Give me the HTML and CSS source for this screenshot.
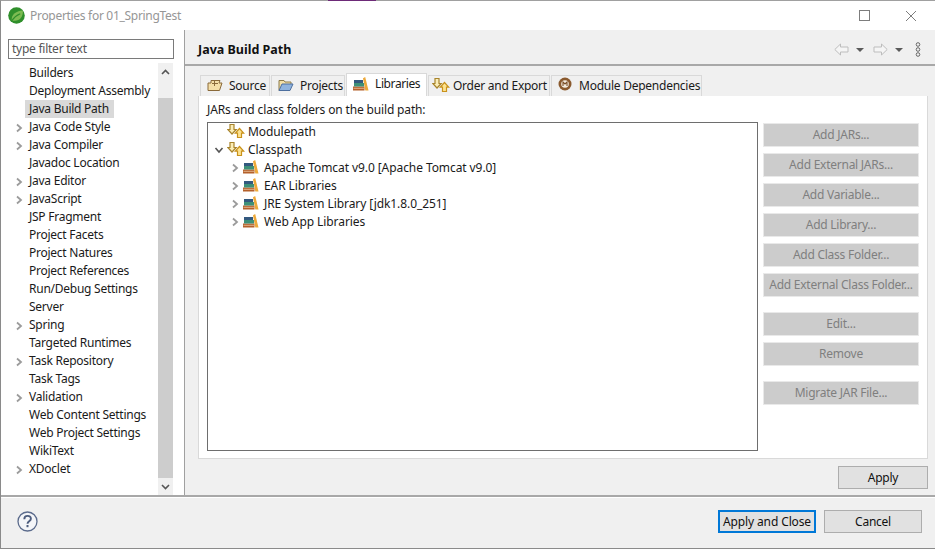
FILE: index.html
```html
<!DOCTYPE html>
<html lang="en">
<head>
<meta charset="utf-8">
<title>Properties for 01_SpringTest</title>
<link rel="stylesheet" href="styles.css">
</head>
<body>
<svg class="defs" width="0" height="0">
  <defs>
    <symbol id="cp" viewBox="0 0 18 16">
      <path d="M3 1.500h4v5h2.200L5 11 .8 6.500H3z" fill="#fbeeb8" stroke="#a8842c" stroke-width="1.200"/>
      <path d="M12.500 5.500l4.200 4.700h-2.200v4.300h-4v-4.300H8.300z" fill="#fde391" stroke="#c9921c" stroke-width="1.200"/>
    </symbol>
    <symbol id="lib" viewBox="0 0 16 14">
      <rect x="0" y="9.500" width="11.500" height="4" fill="#b4602b"/>
      <rect x=".5" y="10.800" width="10.500" height="1" fill="#e2b48c"/>
      <rect x="1" y="6" width="10" height="3.500" fill="#3d9078"/>
      <rect x="1" y="3" width="9" height="3" fill="#33597f"/>
      <path d="M10 1.300l2.200-1.300 3.300 13.500h-3.200z" fill="#eda93a"/>
    </symbol>
    <symbol id="chev-r" viewBox="0 0 10 10"><path d="M3 1.500L7 5 3 8.500" fill="none" stroke="#9b9b9b" stroke-width="1.800"/></symbol>
    <symbol id="chev-d" viewBox="0 0 10 10"><path d="M1.500 3L5 7l3.500-4" fill="none" stroke="#555" stroke-width="1.600"/></symbol>
  </defs>
</svg>
<div class="window">
  <div class="behind-sliver"></div>
  <header class="titlebar">
    <svg class="app-icon" width="17" height="17" viewBox="0 0 16 16">
      <circle cx="8" cy="8" r="7.800" fill="#2f8f2b"/>
      <path d="M3.500 12.500C3 7.500 7 3.800 14 3.300c.4 5.700-3 9.700-7.500 9.700-1.300 0-2.200-.2-3-.5z" fill="#7dbb52"/>
      <path d="M3.500 13C5.500 9.800 8 7.800 11.500 6.300" stroke="#2f8f2b" fill="none"/>
    </svg>
    <span class="title-text">Properties for 01_SpringTest</span>
    <div class="win-controls">
      <svg width="11" height="11" viewBox="0 0 11 11"><rect x=".5" y=".5" width="10" height="10" fill="none" stroke="#7d7d7d"/></svg>
      <svg width="12" height="12" viewBox="0 0 12 12"><path d="M1 1l10 10M11 1L1 11" stroke="#7d7d7d" fill="none"/></svg>
    </div>
  </header>
  <div class="main">
    <aside class="sidebar">
      <div class="filter">type filter text</div>
      <div class="tree-wrap">
        <ul class="nav">
          <li><span class="tw"></span><span>Builders</span></li>
          <li><span class="tw"></span><span>Deployment Assembly</span></li>
          <li><span class="tw"></span><span class="sel">Java Build Path</span></li>
          <li><span class="tw"><svg width="10" height="10"><use href="#chev-r"/></svg></span><span>Java Code Style</span></li>
          <li><span class="tw"><svg width="10" height="10"><use href="#chev-r"/></svg></span><span>Java Compiler</span></li>
          <li><span class="tw"></span><span>Javadoc Location</span></li>
          <li><span class="tw"><svg width="10" height="10"><use href="#chev-r"/></svg></span><span>Java Editor</span></li>
          <li><span class="tw"><svg width="10" height="10"><use href="#chev-r"/></svg></span><span>JavaScript</span></li>
          <li><span class="tw"></span><span>JSP Fragment</span></li>
          <li><span class="tw"></span><span>Project Facets</span></li>
          <li><span class="tw"></span><span>Project Natures</span></li>
          <li><span class="tw"></span><span>Project References</span></li>
          <li><span class="tw"></span><span>Run/Debug Settings</span></li>
          <li><span class="tw"></span><span>Server</span></li>
          <li><span class="tw"><svg width="10" height="10"><use href="#chev-r"/></svg></span><span>Spring</span></li>
          <li><span class="tw"></span><span>Targeted Runtimes</span></li>
          <li><span class="tw"><svg width="10" height="10"><use href="#chev-r"/></svg></span><span>Task Repository</span></li>
          <li><span class="tw"></span><span>Task Tags</span></li>
          <li><span class="tw"><svg width="10" height="10"><use href="#chev-r"/></svg></span><span>Validation</span></li>
          <li><span class="tw"></span><span>Web Content Settings</span></li>
          <li><span class="tw"></span><span>Web Project Settings</span></li>
          <li><span class="tw"></span><span>WikiText</span></li>
          <li><span class="tw"><svg width="10" height="10"><use href="#chev-r"/></svg></span><span>XDoclet</span></li>
        </ul>
        <div class="scrollbar">
          <svg class="sb-arrow" width="15" height="17" viewBox="0 0 15 17"><path d="M4 11l3.500-3.500L11 11" fill="none" stroke="#555" stroke-width="1.600"/></svg>
          <div class="sb-thumb"></div>
          <svg class="sb-arrow" width="15" height="17" viewBox="0 0 15 17"><path d="M4 7l3.500 3.500L11 7" fill="none" stroke="#555" stroke-width="1.600"/></svg>
        </div>
      </div>
    </aside>
    <section class="content">
      <div class="page-head">
        <h1>Java Build Path</h1>
        <div class="head-tools">
          <svg width="15" height="13" viewBox="0 0 15 13"><path d="M.8 6.500L6.500 1v3h7.500v5H6.500v3z" fill="#f5f5f5" stroke="#bdbdbd"/></svg>
          <svg class="drop" width="8" height="4" viewBox="0 0 8 4"><path d="M0 0h8L4 4z" fill="#5a5a5a"/></svg>
          <svg class="next" width="15" height="13" viewBox="0 0 15 13"><path d="M14.200 6.500L8.500 1v3H1v5h7.500v3z" fill="#f5f5f5" stroke="#bdbdbd"/></svg>
          <svg class="drop" width="8" height="4" viewBox="0 0 8 4"><path d="M0 0h8L4 4z" fill="#5a5a5a"/></svg>
          <svg class="menu" width="6" height="15" viewBox="0 0 6 15"><g fill="none" stroke="#666"><circle cx="3" cy="2.500" r="1.800"/><circle cx="3" cy="7.500" r="1.800"/><circle cx="3" cy="12.500" r="1.800"/></g></svg>
        </div>
      </div>
      <div class="page-body">
        <div class="tabs">
          <div class="tab t-source">
            <svg width="16" height="14" viewBox="0 0 16 14"><path d="M1 12.500V5h3V2.500h9l-1 2.500h3l-2.500 7.500z" fill="#f5dfa8" stroke="#8a6a3a"/><path d="M7.500 2.500V8M5 5.500h6" stroke="#8a6a3a" fill="none"/></svg>
            <span>Source</span>
          </div>
          <div class="tab t-projects">
            <svg width="16" height="14" viewBox="0 0 16 14"><path d="M1 12.500V2.500h5l1 1.500h6v2" fill="#f3dfa6" stroke="#8c7a4a"/><path d="M1 12.500L4 6h11l-3 6.500z" fill="#8fb3de" stroke="#4d6f9f"/></svg>
            <span>Projects</span>
          </div>
          <div class="tab tab-active t-lib">
            <svg width="16" height="14"><use href="#lib"/></svg>
            <span>Libraries</span>
          </div>
          <div class="tab t-order">
            <svg width="18" height="16"><use href="#cp"/></svg>
            <span>Order and Export</span>
          </div>
          <div class="tab t-module">
            <svg class="m-icon" width="14" height="14" viewBox="0 0 14 14"><circle cx="7" cy="7" r="6.500" fill="#8a5a2e"/><circle cx="7" cy="7" r="3.800" fill="#f3ece0"/><path d="M5 9V5l2 2 2-2v4" fill="none" stroke="#7a4e26" stroke-width="1.100"/></svg>
            <span>Module Dependencies</span>
          </div>
        </div>
        <div class="panel">
          <div class="panel-label">JARs and class folders on the build path:</div>
          <div class="panel-row">
            <div class="path-tree">
              <div class="row r1"><span class="tw2"></span><svg width="18" height="16"><use href="#cp"/></svg><span>Modulepath</span></div>
              <div class="row r1"><span class="tw2"><svg width="10" height="10"><use href="#chev-d"/></svg></span><svg width="18" height="16"><use href="#cp"/></svg><span>Classpath</span></div>
              <div class="row r2"><span class="tw2"><svg width="10" height="10"><use href="#chev-r"/></svg></span><svg width="16" height="14"><use href="#lib"/></svg><span>Apache Tomcat v9.0 [Apache Tomcat v9.0]</span></div>
              <div class="row r2"><span class="tw2"><svg width="10" height="10"><use href="#chev-r"/></svg></span><svg width="16" height="14"><use href="#lib"/></svg><span>EAR Libraries</span></div>
              <div class="row r2"><span class="tw2"><svg width="10" height="10"><use href="#chev-r"/></svg></span><svg width="16" height="14"><use href="#lib"/></svg><span>JRE System Library [jdk1.8.0_251]</span></div>
              <div class="row r2"><span class="tw2"><svg width="10" height="10"><use href="#chev-r"/></svg></span><svg width="16" height="14"><use href="#lib"/></svg><span>Web App Libraries</span></div>
            </div>
            <div class="side-buttons">
              <div class="btn-group">
                <div class="dis">Add JARs...</div>
                <div class="dis">Add External JARs...</div>
                <div class="dis">Add Variable...</div>
                <div class="dis">Add Library...</div>
                <div class="dis">Add Class Folder...</div>
                <div class="dis">Add External Class Folder...</div>
              </div>
              <div class="btn-group">
                <div class="dis">Edit...</div>
                <div class="dis">Remove</div>
              </div>
              <div class="btn-group">
                <div class="dis">Migrate JAR File...</div>
              </div>
            </div>
          </div>
        </div>
        <div class="apply-row"><div class="btn btn-apply">Apply</div></div>
      </div>
    </section>
  </div>
  <footer class="footer">
    <svg class="help" width="21" height="21" viewBox="0 0 21 21"><circle cx="10.500" cy="10.500" r="9.500" fill="#f4f5f8" stroke="#5b6b8c" stroke-width="1.300"/><path d="M7.300 8.200c0-4.300 6.600-4.300 6.600-.4 0 2.500-3.400 2.600-3.400 5" fill="none" stroke="#4d5d7e" stroke-width="1.900"/><rect x="9.500" y="14" width="2" height="2.200" fill="#4d5d7e"/></svg>
    <div class="footer-btns">
      <div class="btn btn-default">Apply and Close</div>
      <div class="btn btn-cancel">Cancel</div>
    </div>
  </footer>
</div>
</body>
</html>
```
FILE: styles.css
```css
* { box-sizing: border-box; }
html, body { margin: 0; padding: 0; }
body {
  width: 935px;
  height: 549px;
  overflow: hidden;
  font-family: "Noto Sans", "Open Sans", "Liberation Sans", sans-serif;
  font-size: 12px;
  letter-spacing: -0.25px;
  color: #1a1a1a;
}
.defs { position: absolute; }
svg { display: block; flex: none; }
.window {
  position: relative;
  width: 935px;
  height: 549px;
  display: flex;
  flex-direction: column;
  background: #fff;
  border: 1px solid #8a8a8a;
  border-top-color: #a0a0a0;
  border-right: 0;
}
.behind-sliver {
  position: absolute;
  top: -1px;
  left: 327px;
  width: 48px;
  height: 1px;
  background: #6d2a78;
}
.titlebar {
  height: 29px;
  display: flex;
  align-items: center;
  padding-left: 7px;
  background: #fff;
}
.title-text { margin-left: 5px; color: #969696; letter-spacing: -0.3px; }
.win-controls {
  margin-left: auto;
  display: flex;
  align-items: center;
  gap: 35px;
  padding-right: 18px;
}
.main { height: 465px; display: flex; }
.sidebar {
  width: 184px;
  padding: 9px 10px 0 7px;
  border-right: 1px solid #a0a0a0;
  background: #fff;
  display: flex;
  flex-direction: column;
}
.filter {
  height: 20px;
  border: 1px solid #7a7a7a;
  padding-left: 3px;
  line-height: 18px;
  color: #555;
}
.tree-wrap { flex: 1; margin: 5px 1px 0 0; display: flex; min-height: 0; }
.nav { list-style: none; margin: 0; padding: 0; flex: 1; }
.nav li { height: 18px; display: flex; align-items: center; line-height: 18px; white-space: nowrap; }
.nav .tw { width: 21px; padding-left: 6px; margin-top: 2px; flex: none; }
.nav .sel { background: #d9d9d9; padding: 0 4px; margin-left: -4px; width: 89px; }
.nav li span:last-child { color: #1a1a1a; }
.scrollbar { width: 15px; margin-top: -1px; display: flex; flex-direction: column; background: #f0f0f0; }
.sb-arrow { height: 17px; }
.sb-thumb { height: 380px; flex: none; background: #cdcdcd; margin-top: 18px; margin-bottom: auto; }
.content { flex: 1; display: flex; flex-direction: column; background: #f0f0f0; }
.page-head {
  height: 36px;
  display: flex;
  align-items: center;
  padding: 5px 14px 0 13px;
  border-bottom: 2px solid #a8a8a8;
}
.page-head h1 { margin: 0; font-size: 12.500px; font-weight: 700; color: #111; letter-spacing: 0; }
.head-tools { margin-left: auto; display: flex; align-items: center; gap: 7px; }
.head-tools .next { margin-left: 2px; }
.head-tools .menu { margin-left: 5px; }
.page-body { flex: 1; padding: 7px 7px 0 13px; display: flex; flex-direction: column; }
.tabs { display: flex; height: 23px; margin-left: 2px; align-items: flex-end; gap: 1px; }
.tab {
  height: 21px;
  display: flex;
  align-items: center;
  gap: 6px;
  padding: 0 0 2px 6px;
  background: #f0f0f0;
  border: 1px solid #d9d9d9;
  border-bottom: 0;
  white-space: nowrap;
}
.t-source { width: 70px; }
.t-projects { width: 74px; }
.t-lib { width: 81px; }
.t-order { width: 122px; padding-left: 3px; gap: 3px; }
.t-module { width: 151px; padding-left: 6px; gap: 7px; }
.m-icon { margin-top: -3px; }
.tab-active { height: 23px; background: #fff; padding-bottom: 3px; }
.t-lib span { letter-spacing: -0.4px; }
.panel {
  height: 363px;
  background: #fff;
  border: 1px solid #d9d9d9;
  border-top: 0;
  padding: 5px 8px 0 8px;
}
.panel-label { height: 18px; line-height: 18px; letter-spacing: -0.15px; }
.panel-row { display: flex; margin-top: 3px; }
.path-tree {
  width: 551px;
  height: 329px;
  border: 1px solid #6e6e6e;
}
.row { height: 18px; display: flex; align-items: center; white-space: nowrap; position: relative; top: -1px; letter-spacing: -0.08px; }
.r1 { padding-left: 6px; }
.r1 .tw2 { width: 13px; }
.r1 svg + span { margin-left: 3px; }
.r2 { padding-left: 22px; }
.r2 .tw2 { width: 13px; }
.r2 svg + span { margin-left: 5px; }
.tw2 { flex: none; margin-top: 2px; }
.side-buttons { margin-left: 5px; width: 156px; padding-top: 1px; display: flex; flex-direction: column; gap: 15px; }
.btn-group { display: flex; flex-direction: column; gap: 6px; }
.dis {
  height: 24px;
  line-height: 22px;
  text-align: center;
  background: #cccccc;
  border: 1px solid #e9e9e9;
  color: #7f7f7f;
  white-space: nowrap;
}
.btn {
  height: 23px;
  line-height: 21px;
  text-align: center;
  background: #e1e1e1;
  border: 1px solid #adadad;
  color: #111;
}
.apply-row { display: flex; justify-content: flex-end; margin-top: 7px; }
.btn-apply { width: 90px; }
.footer {
  flex: 1;
  display: flex;
  align-items: center;
  border-top: 2px solid #a8a8a8;
  box-shadow: inset 0 1px 0 #fff;
  background: #f0f0f0;
  padding: 0 13px 3px 16px;
}
.footer-btns { margin-left: auto; display: flex; gap: 8px; }
.btn-default { width: 98px; border: 2px solid #0078d7; line-height: 19px; letter-spacing: -0.12px; }
.btn-cancel { width: 98px; }
```
